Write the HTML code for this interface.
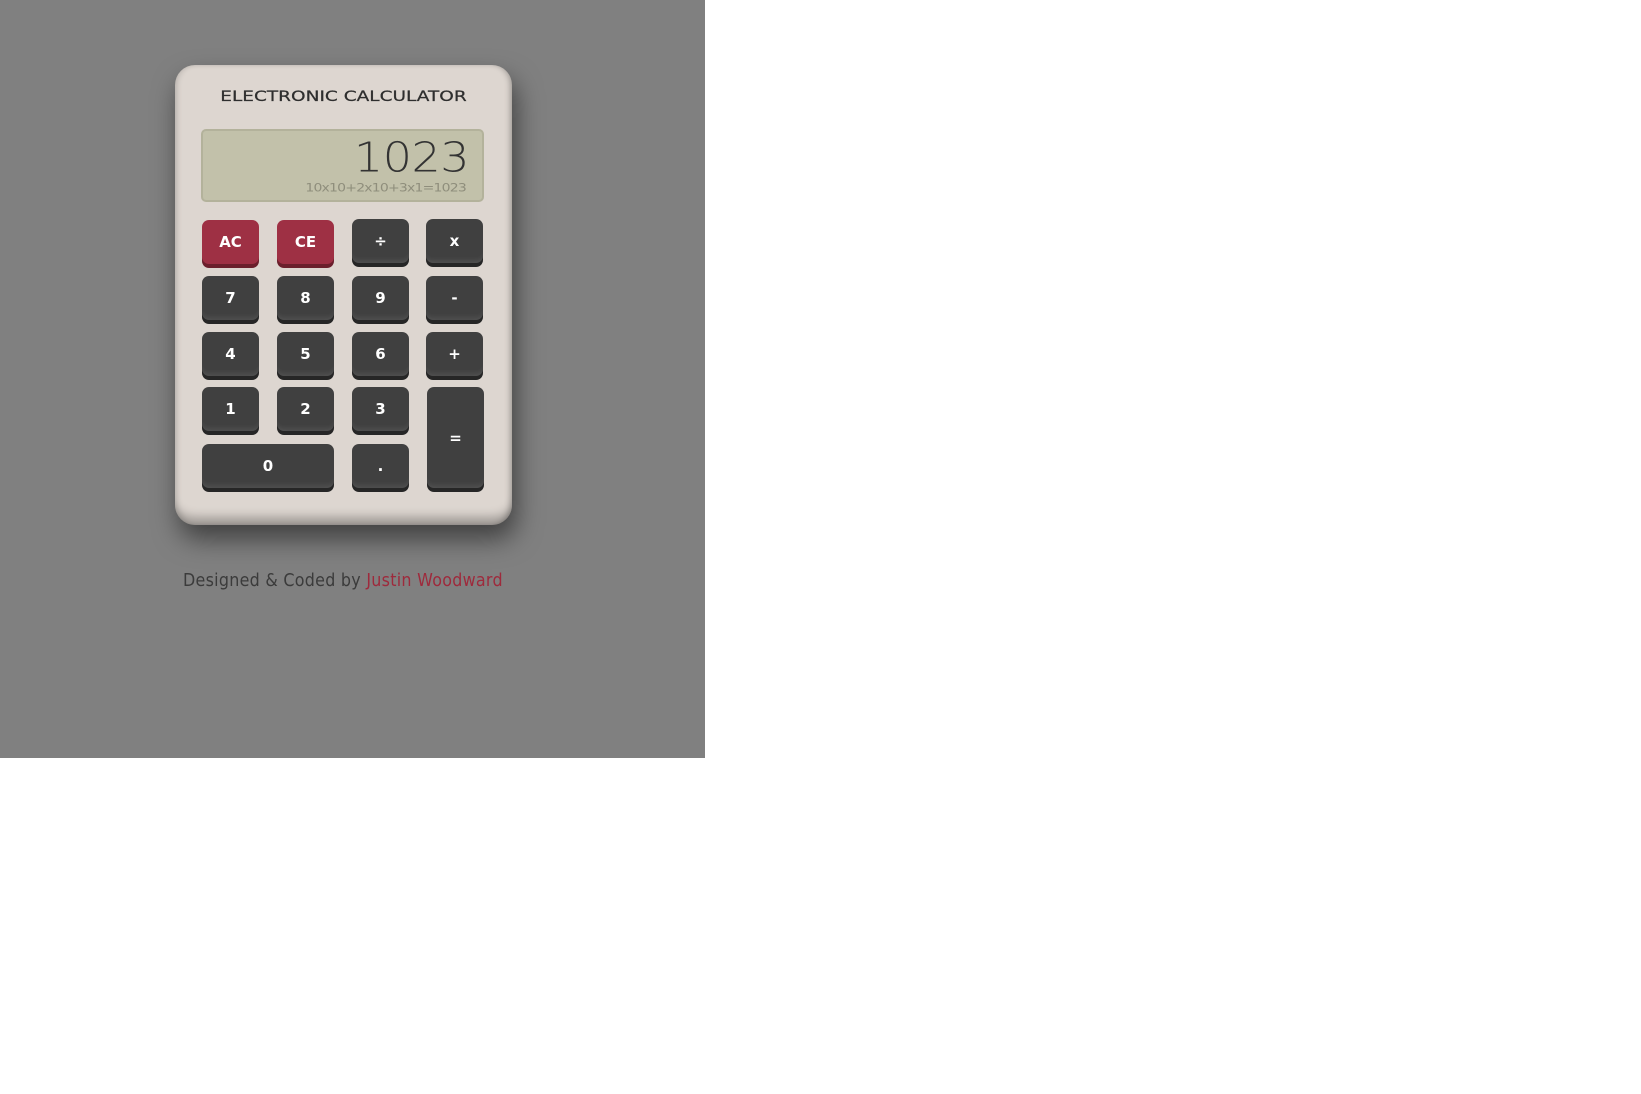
<!DOCTYPE html>
<html><head><style>
html,body{margin:0;padding:0;background:#fff;width:1641px;height:1094px;overflow:hidden}
#bg{position:absolute;left:0;top:0;width:705px;height:758px;background:#808080}
#calc{position:absolute;left:175px;top:65px;width:337px;height:460px;background:#ddd6d0;border-radius:20px;
box-shadow:4px 14px 26px rgba(0,0,0,.5), inset 0 -14px 10px -6px rgba(0,0,0,.28), inset -4px 0 6px -2px rgba(0,0,0,.25), inset 4px 0 6px -2px rgba(0,0,0,.15)}
.t{position:absolute;left:0;width:337px;top:21px;text-align:center;font:18.5px "DejaVu Sans",sans-serif;color:#2e2e2e;letter-spacing:0px;transform:scaleY(.78);-webkit-text-stroke:0.3px #2e2e2e}
#disp{position:absolute;left:26px;top:64px;width:283px;height:73px;background:#c2c1aa;border:2px solid #b3b29b;border-radius:5px;box-sizing:border-box}
.big{position:absolute;right:13px;top:-1px;font:300 46px "DejaVu Sans",sans-serif;color:#333;letter-spacing:-0.5px;transform:scaleY(.9)}
.small{position:absolute;right:16px;top:49px;font:14px "DejaVu Sans",sans-serif;color:#8f8e7c;letter-spacing:-0.8px;transform:scaleY(.85)}
.b{position:absolute;width:57px;height:44px;background:#404040;border-radius:7px;box-shadow:0 4px 0 #262626, inset 0 -6px 6px -4px rgba(255,255,255,.1);
color:#fff;font:bold 15px "DejaVu Sans",sans-serif;display:flex;align-items:center;justify-content:center}
.r{background:#9e3044;box-shadow:0 4px 0 #6b1f2c}
#foot{position:absolute;left:183px;top:570px;font:18px "DejaVu Sans",sans-serif;color:#3b3b3b;letter-spacing:0.3px;transform:scaleX(.885);transform-origin:left}
#foot span{color:#9e2a3c}
</style></head><body>
<div id="bg"></div>
<div id="calc">
<div class="t">ELECTRONIC CALCULATOR</div>
<div id="disp"><div class="big">1023</div><div class="small">10x10+2x10+3x1=1023</div></div>
</div>
<div class="b r" style="left:202px;top:220px">AC</div>
<div class="b r" style="left:277px;top:220px">CE</div>
<div class="b" style="left:352px;top:219px">÷</div>
<div class="b" style="left:426px;top:219px">x</div>
<div class="b" style="left:202px;top:276px">7</div>
<div class="b" style="left:277px;top:276px">8</div>
<div class="b" style="left:352px;top:276px">9</div>
<div class="b" style="left:426px;top:276px">-</div>
<div class="b" style="left:202px;top:332px">4</div>
<div class="b" style="left:277px;top:332px">5</div>
<div class="b" style="left:352px;top:332px">6</div>
<div class="b" style="left:426px;top:332px">+</div>
<div class="b" style="left:202px;top:387px">1</div>
<div class="b" style="left:277px;top:387px">2</div>
<div class="b" style="left:352px;top:387px">3</div>
<div class="b" style="left:427px;top:387px;height:101px">=</div>
<div class="b" style="left:202px;top:444px;width:132px">0</div>
<div class="b" style="left:352px;top:444px">.</div>
<div id="foot">Designed &amp; Coded by <span>Justin Woodward</span></div>
</body></html>
